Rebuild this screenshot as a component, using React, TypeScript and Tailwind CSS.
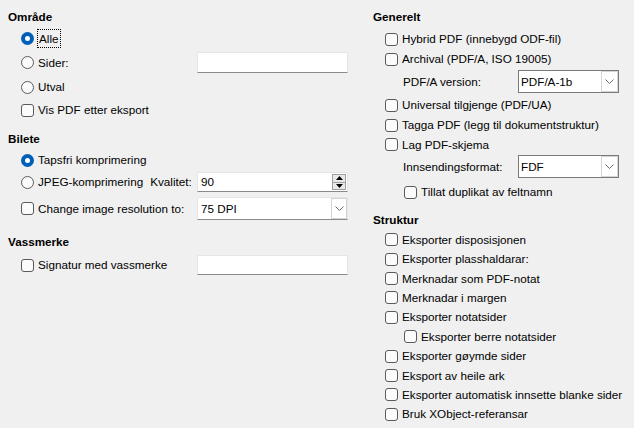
import React from "react";

const Chevron = () => (
  <svg width="9" height="5" viewBox="0 0 9 5" fill="none">
    <path d="M0.5 0.5 L4.5 4.5 L8.5 0.5" stroke="#6a6a6a" strokeWidth="1" />
  </svg>
);

const Checkbox = () => (
  <span className="inline-block w-[13px] h-[13px] rounded-[3px] border border-[#5a5a5a] bg-[#fbfbfb] shrink-0" />
);

const Radio = ({ checked }: { checked?: boolean }) =>
  checked ? (
    <span className="w-[13px] h-[13px] rounded-full bg-[#005fb8] flex items-center justify-center shrink-0">
      <span className="w-[5px] h-[5px] rounded-full bg-white" />
    </span>
  ) : (
    <span className="inline-block w-[13px] h-[13px] rounded-full border border-[#5a5a5a] bg-[#fbfbfb] shrink-0" />
  );

const TextBox = ({ value, h = "h-[21px]" }: { value?: string; h?: string }) => (
  <div className={`w-[151px] ${h} bg-white border border-[#e6e6e6] border-b-[#8a8a8a] flex items-center pl-[3px] shrink-0`}>
    {value}
  </div>
);

const Heading = ({ children, cls = "" }: { children: React.ReactNode; cls?: string }) => (
  <div className={`h-[20px] flex items-center font-bold ${cls}`}>{children}</div>
);

export default function App() {
  return (
    <div
      className="w-[634px] h-[428px] bg-[#f0f0f0] text-black text-[11.7px] flex overflow-hidden whitespace-nowrap"
      style={{ fontFamily: '"Liberation Sans", Arial, sans-serif' }}
    >
      {/* Left column */}
      <div className="w-[365px] pl-[8px] pt-[7px] flex flex-col">
        <Heading>Område</Heading>
        <div className="mt-[1px] h-[20px] flex items-center pl-[13px]">
          <Radio checked />
          <span className="ml-[3px] border border-dotted border-black px-[1px] leading-[17px]">Alle</span>
        </div>
        <div className="mt-[4px] h-[21px] flex items-center pl-[13px]">
          <Radio />
          <span className="ml-[4px] w-[159px]">Sider:</span>
          <TextBox />
        </div>
        <div className="mt-[4px] h-[20px] flex items-center pl-[13px]">
          <Radio />
          <span className="ml-[4px]">Utval</span>
        </div>
        <div className="mt-[3px] h-[20px] flex items-center pl-[13px]">
          <Checkbox />
          <span className="ml-[4px]">Vis PDF etter eksport</span>
        </div>

        <Heading cls="mt-[9px]">Bilete</Heading>
        <div className="mt-[1px] h-[20px] flex items-center pl-[13px]">
          <Radio checked />
          <span className="ml-[4px]">Tapsfri komprimering</span>
        </div>
        <div className="mt-[2px] h-[20px] flex items-center pl-[13px]">
          <Radio />
          <span className="ml-[4px] w-[159px] flex">
            <span>JPEG-komprimering</span>
            <span className="ml-[7px]">Kvalitet:</span>
          </span>
          <div className="w-[151px] h-[20px] bg-white border border-[#e6e6e6] border-b-[#8a8a8a] flex items-center pl-[3px] shrink-0">
            <span className="flex-1">90</span>
            <div className="w-[14px] h-[16px] flex flex-col mr-[1px] border border-[#a0a0a0] bg-[#e9e9e9]">
              <div className="flex-1 border-b border-[#a0a0a0] flex items-center justify-center">
                <svg width="7" height="4" viewBox="0 0 7 4"><path d="M0 4 L3.5 0 L7 4 Z" fill="#000" /></svg>
              </div>
              <div className="flex-1 flex items-center justify-center">
                <svg width="7" height="4" viewBox="0 0 7 4"><path d="M0 0 L3.5 4 L7 0 Z" fill="#000" /></svg>
              </div>
            </div>
          </div>
        </div>
        <div className="mt-[5px] h-[23px] flex items-center pl-[13px]">
          <Checkbox />
          <span className="ml-[4px] w-[159px]">Change image resolution to:</span>
          <div className="w-[151px] h-[23px] bg-white border border-[#e6e6e6] border-b-[#8a8a8a] flex items-center pl-[3px] shrink-0">
            <span className="flex-1">75 DPI</span>
            <div className="w-[16px] h-[21px] border border-[#d4d4d4] flex items-center justify-center">
              <Chevron />
            </div>
          </div>
        </div>

        <Heading cls="mt-[12px]">Vassmerke</Heading>
        <div className="mt-[3px] h-[20px] flex items-center pl-[13px]">
          <Checkbox />
          <span className="ml-[4px] w-[159px]">Signatur med vassmerke</span>
          <TextBox h="h-[20px]" />
        </div>
      </div>

      {/* Right column */}
      <div className="flex-1 pl-[8px] pt-[7px] flex flex-col">
        <Heading>Generelt</Heading>
        <div className="pl-[12px] flex flex-col">
          <div className="mt-[2px] h-[20px] flex items-center">
            <Checkbox />
            <span className="ml-[4px]">Hybrid PDF (innebygd ODF-fil)</span>
          </div>
          <div className="h-[20px] flex items-center">
            <Checkbox />
            <span className="ml-[4px]">Archival (PDF/A, ISO 19005)</span>
          </div>
          <div className="mt-[1px] h-[23px] flex items-center pl-[18px]">
            <span className="w-[115px]">PDF/A version:</span>
            <div className="w-[101px] h-[23px] bg-white border border-[#7a7a7a] flex items-center pl-[2px]">
              <span className="flex-1">PDF/A-1b</span>
              <div className="w-[17px] h-[21px] border border-[#d4d4d4] flex items-center justify-center">
                <Chevron />
              </div>
            </div>
          </div>
          <div className="mt-[2px] h-[20px] flex items-center">
            <Checkbox />
            <span className="ml-[4px]">Universal tilgjenge (PDF/UA)</span>
          </div>
          <div className="h-[20px] flex items-center">
            <Checkbox />
            <span className="ml-[4px]">Tagga PDF (legg til dokumentstruktur)</span>
          </div>
          <div className="h-[19px] flex items-center">
            <Checkbox />
            <span className="ml-[4px]">Lag PDF-skjema</span>
          </div>
          <div className="mt-[1px] h-[23px] flex items-center pl-[18px]">
            <span className="w-[115px]">Innsendingsformat:</span>
            <div className="w-[101px] h-[23px] bg-white border border-[#7a7a7a] flex items-center pl-[2px]">
              <span className="flex-1">FDF</span>
              <div className="w-[17px] h-[21px] border border-[#d4d4d4] flex items-center justify-center">
                <Chevron />
              </div>
            </div>
          </div>
          <div className="mt-[4px] h-[20px] flex items-center pl-[19px]">
            <Checkbox />
            <span className="ml-[4px]">Tillat duplikat av feltnamn</span>
          </div>
        </div>

        <Heading cls="mt-[8px]">Struktur</Heading>
        <div className="pl-[12px] flex flex-col">
          {[
            "Eksporter disposisjonen",
            "Eksporter plasshaldarar:",
            "Merknadar som PDF-notat",
            "Merknadar i margen",
            "Eksporter notatsider",
            "Eksporter berre notatsider",
            "Eksporter gøymde sider",
            "Eksport av heile ark",
            "Eksporter automatisk innsette blanke sider",
            "Bruk XObject-referansar",
          ].map((t, i) => (
            <div key={t} className={`h-[19.4px] flex items-center ${i === 5 ? "pl-[19px]" : ""}`}>
              <Checkbox />
              <span className="ml-[4px]">{t}</span>
            </div>
          ))}
        </div>
      </div>
    </div>
  );
}
